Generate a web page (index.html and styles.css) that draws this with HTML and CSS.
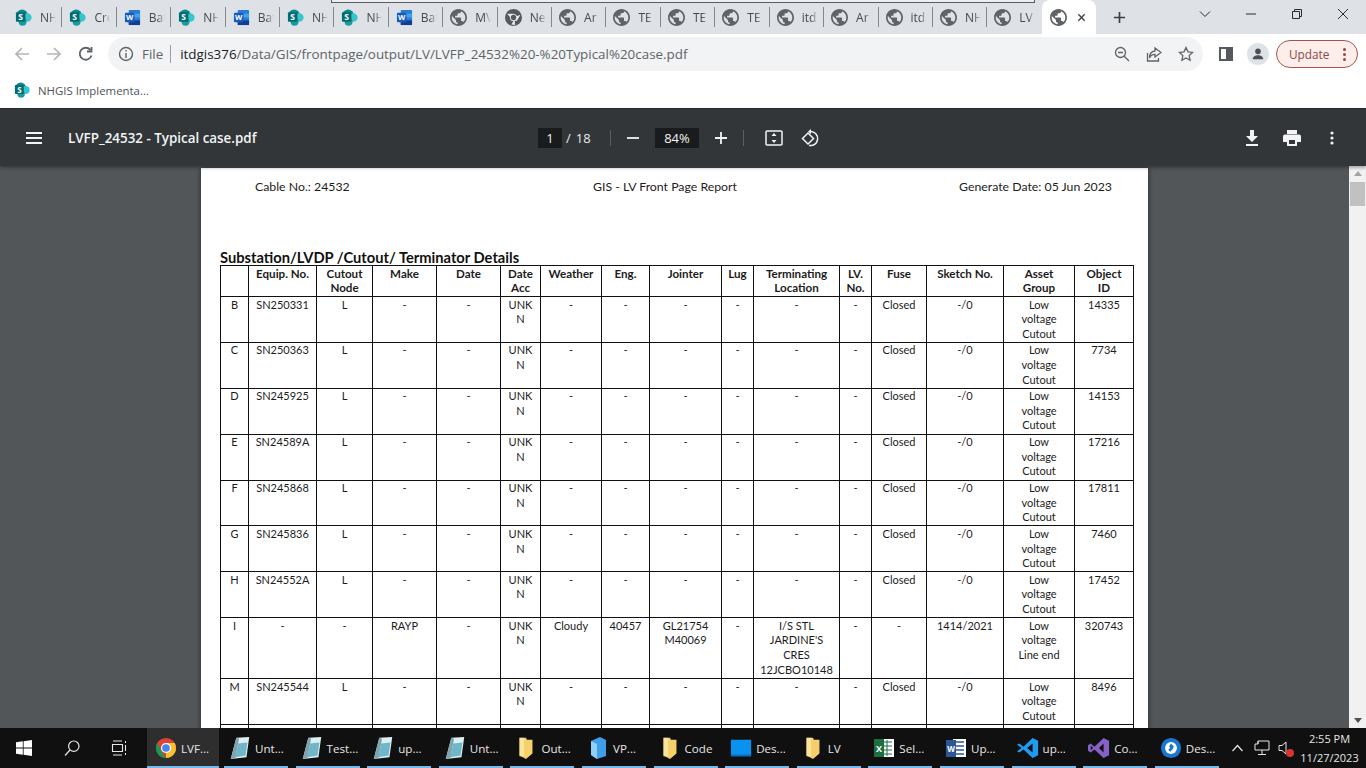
FILE: index.html
```html
<!DOCTYPE html>
<html lang="en">
<head>
<meta charset="utf-8">
<title>LVFP_24532 - Typical case.pdf</title>
<link rel="stylesheet" href="styles.css">
</head>
<body>
<svg class="sprite" width="0" height="0" aria-hidden="true">
  <symbol id="sp" viewBox="0 0 18 18">
    <circle cx="7.500" cy="6.500" r="6" fill="#058a8e"/>
    <circle cx="13" cy="9" r="4.600" fill="#37c6d0"/>
    <circle cx="8" cy="13.500" r="4.200" fill="#1a9ba1"/>
    <rect x="1" y="3.500" width="10" height="10" rx="1" fill="#036c70"/>
    <text x="6" y="12" font-size="9" font-weight="700" fill="#fff" text-anchor="middle" font-family="Open Sans">S</text>
  </symbol>
  <symbol id="wd" viewBox="0 0 18 18">
    <rect x="5" y="1" width="12" height="16" rx="1" fill="#2b7cd3"/>
    <rect x="5" y="12" width="12" height="5" fill="#103f91"/>
    <rect x="11" y="5" width="6" height="4" fill="#41a5ee"/>
    <rect x="1" y="4" width="10" height="10" rx="1" fill="#185abd"/>
    <text x="6" y="12" font-size="8" font-weight="700" fill="#fff" text-anchor="middle" font-family="Open Sans">W</text>
  </symbol>
  <symbol id="gl" viewBox="2 2 20 20">
    <path fill="#5f6368" d="M12 2C6.480 2 2 6.480 2 12s4.480 10 10 10 10-4.480 10-10S17.520 2 12 2zm-1 17.930c-3.950-.490-7-3.850-7-7.930 0-.620.080-1.210.210-1.790L9 15v1c0 1.100.900 2 2 2v1.930zm6.900-2.540c-.260-.810-1-1.390-1.900-1.390h-1v-3c0-.550-.450-1-1-1H8v-2h2c.550 0 1-.450 1-1V7h2c1.100 0 2-.900 2-2v-.410c2.930 1.190 5 4.060 5 7.410 0 2.080-.800 3.970-2.100 5.390z"/>
  </symbol>
  <symbol id="cg" viewBox="0 0 16 16">
    <circle cx="8" cy="8" r="8" fill="#55585c"/>
    <path d="M2 4.500h6.500l-3 4zM14.500 5.500l-3.500 6-2-4zM6 14.500l3-5 .5 5.500z" fill="#e8eaed"/>
    <circle cx="8" cy="8" r="3.400" fill="#e8eaed"/>
    <circle cx="8" cy="8" r="2.500" fill="#55585c"/>
  </symbol>
  <symbol id="np" viewBox="0 0 22 26">
    <path d="M7 2l14-1-3 22-17 2z" fill="#dfeef2"/>
    <path d="M1 25l6-23 3 1-4 21z" fill="#7fa3ad"/>
    <path d="M9 8l10-1-2 14-11 2z" fill="#6fb6c9"/>
  </symbol>
  <symbol id="fd" viewBox="0 0 16 26">
    <path d="M1 2h7l1 2h6v15l-7 6-7-4z" fill="#f5cf6c"/>
    <path d="M1 2h5v20H1z" fill="#fbe49c"/>
  </symbol>
</svg>

<div class="app">
  <div class="tabstrip">
    <div class="tabs">
      <div class="tab"><svg class="fav"><use href="#sp"/></svg><span class="tab-t">NH</span></div>
      <div class="tab"><svg class="fav"><use href="#sp"/></svg><span class="tab-t">Cre</span></div>
      <div class="tab"><svg class="fav"><use href="#wd"/></svg><span class="tab-t">Bat</span></div>
      <div class="tab"><svg class="fav"><use href="#sp"/></svg><span class="tab-t">NH</span></div>
      <div class="tab"><svg class="fav"><use href="#wd"/></svg><span class="tab-t">Bat</span></div>
      <div class="tab"><svg class="fav"><use href="#sp"/></svg><span class="tab-t">NH</span></div>
      <div class="tab"><svg class="fav"><use href="#sp"/></svg><span class="tab-t">NH</span></div>
      <div class="tab"><svg class="fav"><use href="#wd"/></svg><span class="tab-t">Bat</span></div>
      <div class="tab"><svg class="fav"><use href="#gl"/></svg><span class="tab-t">MV</span></div>
      <div class="tab"><svg class="fav"><use href="#cg"/></svg><span class="tab-t">Ne</span></div>
      <div class="tab"><svg class="fav"><use href="#gl"/></svg><span class="tab-t">Ar</span></div>
      <div class="tab"><svg class="fav"><use href="#gl"/></svg><span class="tab-t">TE</span></div>
      <div class="tab"><svg class="fav"><use href="#gl"/></svg><span class="tab-t">TE</span></div>
      <div class="tab"><svg class="fav"><use href="#gl"/></svg><span class="tab-t">TE</span></div>
      <div class="tab"><svg class="fav"><use href="#gl"/></svg><span class="tab-t">itd</span></div>
      <div class="tab"><svg class="fav"><use href="#gl"/></svg><span class="tab-t">Ar</span></div>
      <div class="tab"><svg class="fav"><use href="#gl"/></svg><span class="tab-t">itd</span></div>
      <div class="tab"><svg class="fav"><use href="#gl"/></svg><span class="tab-t">NH</span></div>
      <div class="tab tab-last"><svg class="fav"><use href="#gl"/></svg><span class="tab-t">LV</span></div>
      <div class="tab-active"><svg class="fav"><use href="#gl"/></svg>
        <svg class="tab-x" viewBox="0 0 10 10"><path d="M1.500 1.500l7 7M8.500 1.500l-7 7"/></svg>
      </div>
    </div>
    <svg class="newtab" viewBox="0 0 14 14"><path d="M7 1v12M1 7h12"/></svg>
    <div class="winctl">
      <svg class="wc" viewBox="0 0 12 12"><path d="M1 3.500l5 5 5-5"/></svg>
      <svg class="wc" viewBox="0 0 12 12"><path d="M1 6h10"/></svg>
      <svg class="wc" viewBox="0 0 12 12"><path d="M1.500 3.500h7v7h-7zM3.500 3.500v-2h7v7h-2"/></svg>
      <svg class="wc" viewBox="0 0 12 12"><path d="M1 1l10 10M11 1L1 11"/></svg>
    </div>
  </div>

  <div class="toolbar">
    <svg class="nav" viewBox="0 0 16 16"><path d="M15 8H2M8 2L2 8l6 6"/></svg>
    <svg class="nav" viewBox="0 0 16 16"><path d="M1 8h13M8 2l6 6-6 6"/></svg>
    <svg class="nav nav-on" viewBox="0 0 16 16"><path d="M13.500 9.500A6 6 0 1 1 12.300 3.800M13.500 1v4.500H9"/></svg>
    <div class="omni">
      <svg class="info" viewBox="0 0 16 16"><circle cx="8" cy="8" r="6.500"/><path d="M8 7v5M8 4v1.600"/></svg>
      <span class="scheme">File</span><i class="omni-sep"></i>
      <span class="url"><b>itdgis376</b>/Data/GIS/frontpage/output/LV/LVFP_24532%20-%20Typical%20case.pdf</span>
      <svg class="omi" viewBox="0 0 16 16"><circle cx="6.500" cy="6.500" r="5"/><path d="M4 6.500h5M10.200 10.200L15 15"/></svg>
      <svg class="omi" viewBox="0 0 16 16"><path d="M9 2l6 4.500L9 11V8.300C6 8.300 4.500 9.500 3.500 12 3.500 8 5.500 5.300 9 5zM1.500 7v8h11v-3"/></svg>
      <svg class="omi" viewBox="0 0 16 16"><path d="M8 1.500l2 4.300 4.700.6-3.500 3.200.9 4.700L8 12l-4.100 2.300.9-4.700-3.500-3.200 4.700-.6z"/></svg>
    </div>
    <div class="side-icon"><i></i></div>
    <div class="avatar"><svg viewBox="0 0 16 16"><circle cx="8" cy="5" r="3.200"/><path d="M2 14c0-3 3-4.500 6-4.500s6 1.500 6 4.500z"/></svg></div>
    <div class="update"><span>Update</span><i class="dots"><b></b><b></b><b></b></i></div>
  </div>

  <div class="bookmarks">
    <svg class="fav"><use href="#sp"/></svg><span>NHGIS Implementa...</span>
  </div>

  <div class="pdfbar">
    <div class="pdf-left">
      <svg class="burger" viewBox="0 0 16 12"><path d="M0 1h16M0 6h16M0 11h16"/></svg>
      <span class="pdf-title">LVFP_24532 - Typical case.pdf</span>
    </div>
    <div class="pdf-mid">
      <span class="numbox page-box">1</span><span class="pdf-total"><em>/</em>18</span>
      <i class="pdf-sep sep-a"></i>
      <svg class="pm" viewBox="0 0 12 12"><path d="M0 6h12"/></svg>
      <span class="numbox zoom-box">84%</span>
      <svg class="pm" viewBox="0 0 12 12"><path d="M0 6h12M6 0v12"/></svg>
      <i class="pdf-sep sep-b"></i>
      <svg class="fit" viewBox="0 0 18 16"><rect x="1" y="1" width="16" height="14" rx="1"/><path class="fill" d="M9 3l2.500 3h-5zM9 13l2.500-3h-5z"/></svg>
      <svg class="rot" viewBox="0 0 18 18"><path d="M1.500 9.500L7 4l5.500 5.500L7 15z"/><path d="M9.500 2.600a7 7 0 1 1-1.500 13.800"/><path class="fill" d="M10 0v5.200L7 2.600z"/></svg>
    </div>
    <div class="pdf-right">
      <svg class="pr" viewBox="0 0 14 16"><path d="M5 0h4v6h4L7 12 1 6h4zM1 14h12v2H1z"/></svg>
      <svg class="pr" viewBox="0 0 18 16"><path fill-rule="evenodd" d="M4 0h10v4H4zM2 4.500h14a2 2 0 0 1 2 2V12h-4v4H4v-4H0V6.500a2 2 0 0 1 2-2zM6 10v4h6v-4z"/></svg>
      <svg class="pr pr-dots" viewBox="0 0 4 14"><circle cx="2" cy="2" r="1.600"/><circle cx="2" cy="7" r="1.600"/><circle cx="2" cy="12" r="1.600"/></svg>
    </div>
  </div>

  <div class="viewer">
    <div class="canvas">
      <div class="page">
        <div class="report-head">
          <span>Cable No.: 24532</span>
          <span>GIS - LV Front Page Report</span>
          <span>Generate Date: 05 Jun 2023</span>
        </div>
        <h2 class="section">Substation/LVDP /Cutout/ Terminator Details</h2>
        <table class="grid">
          <colgroup>
            <col class="c28"><col class="c68"><col class="c56"><col class="c64"><col class="c64"><col class="c40"><col class="c61"><col class="c48"><col class="c72"><col class="c32"><col class="c86"><col class="c32"><col class="c55"><col class="c77"><col class="c71"><col class="c59">
          </colgroup>
          <tr class="rh"><th></th><th>Equip. No.</th><th>Cutout Node</th><th>Make</th><th>Date</th><th>Date Acc</th><th>Weather</th><th>Eng.</th><th>Jointer</th><th>Lug</th><th>Terminating Location</th><th>LV.<br>No.</th><th>Fuse</th><th>Sketch No.</th><th>Asset<br>Group</th><th>Object<br>ID</th></tr>
          <tr><td>B</td><td>SN250331</td><td>L</td><td>-</td><td>-</td><td>UNK<br>N</td><td>-</td><td>-</td><td>-</td><td>-</td><td>-</td><td>-</td><td>Closed</td><td>-/0</td><td>Low<br>voltage<br>Cutout</td><td>14335</td></tr>
          <tr><td>C</td><td>SN250363</td><td>L</td><td>-</td><td>-</td><td>UNK<br>N</td><td>-</td><td>-</td><td>-</td><td>-</td><td>-</td><td>-</td><td>Closed</td><td>-/0</td><td>Low<br>voltage<br>Cutout</td><td>7734</td></tr>
          <tr><td>D</td><td>SN245925</td><td>L</td><td>-</td><td>-</td><td>UNK<br>N</td><td>-</td><td>-</td><td>-</td><td>-</td><td>-</td><td>-</td><td>Closed</td><td>-/0</td><td>Low<br>voltage<br>Cutout</td><td>14153</td></tr>
          <tr><td>E</td><td>SN24589A</td><td>L</td><td>-</td><td>-</td><td>UNK<br>N</td><td>-</td><td>-</td><td>-</td><td>-</td><td>-</td><td>-</td><td>Closed</td><td>-/0</td><td>Low<br>voltage<br>Cutout</td><td>17216</td></tr>
          <tr><td>F</td><td>SN245868</td><td>L</td><td>-</td><td>-</td><td>UNK<br>N</td><td>-</td><td>-</td><td>-</td><td>-</td><td>-</td><td>-</td><td>Closed</td><td>-/0</td><td>Low<br>voltage<br>Cutout</td><td>17811</td></tr>
          <tr><td>G</td><td>SN245836</td><td>L</td><td>-</td><td>-</td><td>UNK<br>N</td><td>-</td><td>-</td><td>-</td><td>-</td><td>-</td><td>-</td><td>Closed</td><td>-/0</td><td>Low<br>voltage<br>Cutout</td><td>7460</td></tr>
          <tr><td>H</td><td>SN24552A</td><td>L</td><td>-</td><td>-</td><td>UNK<br>N</td><td>-</td><td>-</td><td>-</td><td>-</td><td>-</td><td>-</td><td>Closed</td><td>-/0</td><td>Low<br>voltage<br>Cutout</td><td>17452</td></tr>
          <tr class="rtall"><td>I</td><td>-</td><td>-</td><td>RAYP</td><td>-</td><td>UNK<br>N</td><td>Cloudy</td><td>40457</td><td>GL21754<br>M40069</td><td>-</td><td>I/S STL<br>JARDINE'S<br>CRES<br>12JCBO10148</td><td>-</td><td>-</td><td>1414/2021</td><td>Low<br>voltage<br>Line end</td><td>320743</td></tr>
          <tr><td>M</td><td>SN245544</td><td>L</td><td>-</td><td>-</td><td>UNK<br>N</td><td>-</td><td>-</td><td>-</td><td>-</td><td>-</td><td>-</td><td>Closed</td><td>-/0</td><td>Low<br>voltage<br>Cutout</td><td>8496</td></tr>
          <tr><td></td><td></td><td></td><td></td><td></td><td></td><td></td><td></td><td></td><td></td><td></td><td></td><td></td><td></td><td></td><td></td></tr>
        </table>
      </div>
    </div>
    <div class="vscroll">
      <i class="arrow-up"></i>
      <i class="thumb"></i>
      <i class="arrow-down"></i>
    </div>
  </div>

  <div class="taskbar">
    <svg class="tb-win" viewBox="0 0 16 16"><path d="M0 2.300l6.800-1v6.300H0zM7.600 1.200L16 0v7.600H7.600zM0 8.400h6.800v6.300l-6.800-1zM7.600 8.400H16V16l-8.400-1.200z"/></svg>
    <svg class="tb-search" viewBox="0 0 16 16"><circle cx="9.800" cy="6.200" r="5.200"/><path d="M6 10L1 15.500"/></svg>
    <svg class="tb-view" viewBox="0 0 16 16"><path d="M2 1h9M2 15h9M1.500 4.500h10v7h-10zM14.500 1v2M14.500 5v6M14.500 13v2"/></svg>
    <div class="tasks">
      <div class="task task-on">
        <svg class="ticon" viewBox="0 0 24 24"><circle cx="12" cy="12" r="11" fill="#db4437"/><path d="M12 23a11 11 0 0 0 9.500-16.500H12z" fill="#fbc02d"/><path d="M2.500 6.500L8 18l4 5A11 11 0 0 1 1.500 9z" fill="#0f9d58"/><circle cx="12" cy="12" r="5.500" fill="#fff"/><circle cx="12" cy="12" r="4.200" fill="#4285f4"/></svg>
        <span>LVF...</span>
      </div>
      <div class="task"><svg class="ticon"><use href="#np"/></svg><span>Unt...</span></div>
      <div class="task"><svg class="ticon"><use href="#np"/></svg><span>Test...</span></div>
      <div class="task"><svg class="ticon"><use href="#np"/></svg><span>up...</span></div>
      <div class="task"><svg class="ticon"><use href="#np"/></svg><span>Unt...</span></div>
      <div class="task"><svg class="ticon"><use href="#fd"/></svg><span>Out...</span></div>
      <div class="task"><svg class="ticon" viewBox="0 0 20 24"><path d="M3 5l9-4 6 3v16l-9 3-6-4z" fill="#3f9fea"/><path d="M3 5l6 3v15l-6-4z" fill="#8fd0fa"/></svg><span>VP...</span></div>
      <div class="task"><svg class="ticon"><use href="#fd"/></svg><span>Code</span></div>
      <div class="task"><svg class="ticon" viewBox="0 0 24 22"><rect x="1" y="2" width="22" height="18" fill="#0a93ee"/><rect x="1" y="18" width="22" height="2" fill="#0a6fc0"/></svg><span>Des...</span></div>
      <div class="task"><svg class="ticon"><use href="#fd"/></svg><span>LV</span></div>
      <div class="task"><svg class="ticon" viewBox="0 0 22 22"><rect x="8" y="2" width="13" height="18" fill="#fff"/><path d="M10 5h9M10 9h9M10 13h9M10 17h9M14 3v16" stroke="#1d6f42" stroke-width="1"/><rect x="1" y="2" width="10" height="18" fill="#1d6f42"/><text x="6" y="15" font-size="9" font-weight="700" fill="#fff" text-anchor="middle" font-family="Open Sans">X</text></svg><span>Sel...</span></div>
      <div class="task"><svg class="ticon" viewBox="0 0 22 22"><rect x="8" y="2" width="13" height="18" fill="#fff"/><path d="M10 5h9M10 9h9M10 13h9M10 17h9" stroke="#2b5797" stroke-width="1.500"/><rect x="1" y="3" width="10" height="17" fill="#2b5797"/><text x="6" y="15" font-size="8" font-weight="700" fill="#fff" text-anchor="middle" font-family="Open Sans">W</text></svg><span>Up...</span></div>
      <div class="task"><svg class="ticon" viewBox="0 0 24 24"><path d="M17 1l6 3v16l-6 3L7 13.500 2.500 17 0 15.500 5 12 0 8.500 2.500 7 7 10.500zM17 7l-6 5 6 5z" fill="#1f9cf0"/></svg><span>up...</span></div>
      <div class="task"><svg class="ticon" viewBox="0 0 24 24"><path d="M17 1l6 3v16l-6 3L7 13.500 3 17 0 15V9l3-2 4 3.500zM17 7l-5 5 5 5zM3 9.500v5L5.500 12z" fill="#8661c5"/></svg><span>Co...</span></div>
      <div class="task"><svg class="ticon" viewBox="0 0 24 24"><circle cx="12" cy="12" r="11" fill="#1976d2"/><circle cx="12" cy="12" r="6.500" fill="#fff"/><path d="M12 7l3 3-1 3-3 3-2-2 2-2-1-2z" fill="#1976d2"/></svg><span>Des...</span></div>
    </div>
    <div class="tray">
      <svg class="tray-chev" viewBox="0 0 12 8"><path d="M1 7l5-5.500L11 7"/></svg>
      <svg class="tray-net" viewBox="0 0 16 16"><path d="M4 1h11v9H1V4h3zM4 1v3M8 10v4M4 14.500h8"/></svg>
      <div class="tray-snd">
        <svg viewBox="0 0 16 16"><path d="M1 5.500h3l4-3.500v12l-4-3.500H1z"/></svg>
        <i class="mute"></i>
      </div>
      <div class="clock"><span>2:55 PM</span><span>11/27/2023</span></div>
    </div>
  </div>
  <div class="top-artifact"></div>
</div>
</body>
</html>
```
FILE: styles.css
```css
* { box-sizing: border-box; }
html, body { margin: 0; padding: 0; height: 100%; overflow: hidden; }
body { font-family: "Open Sans", "Noto Sans", sans-serif; background: #525659; }
.sprite { position: absolute; }
.app { position: relative; display: flex; flex-direction: column; width: 1366px; height: 768px; overflow: hidden; }

/* Tab strip */
.tabstrip { display: flex; align-items: stretch; height: 34px; background: #dee1e6; flex: none; }
.tabs { display: flex; width: 1096px; padding-left: 8px; flex: none; }
.tab { position: relative; flex: none; width: 54.42px; display: flex; align-items: center; padding-left: 7px; gap: 8px; }
.tab::after { content: ""; position: absolute; right: 0; top: 7px; width: 1px; height: 20px; background: #84878c; }
.tab-last::after { display: none; }
.fav { width: 17px; height: 17px; flex: none; }
.tab-t { font-size: 12px; color: #45494d; width: 16px; flex: none; white-space: nowrap; -webkit-mask-image: linear-gradient(90deg, #000 55%, transparent 100%); mask-image: linear-gradient(90deg, #000 55%, transparent 100%); }
.tab-active { flex: none; width: 54px; display: flex; align-items: center; padding-left: 8px; background: #fff; border-radius: 8px 8px 0 0; }
.tab-x { width: 9px; height: 9px; margin-left: 10px; fill: none; stroke: #44474a; stroke-width: 1.6; }
.newtab { width: 13px; height: 13px; margin: 11px 0 0 17px; fill: none; stroke: #3c4043; stroke-width: 1.8; flex: none; }
.winctl { display: flex; margin-left: auto; }
.wc { width: 46px; height: 12px; margin-top: 8px; fill: none; stroke: #2b2d30; stroke-width: 1; flex: none; }

/* Address bar */
.toolbar { display: flex; align-items: center; height: 40px; background: #fff; padding: 0 8px 0 14px; flex: none; }
.nav { width: 16px; height: 16px; margin-right: 16px; fill: none; stroke: #b2b5b9; stroke-width: 1.7; flex: none; }
.nav-on { stroke: #5f6368; stroke-width: 1.8; margin-right: 14px; }
.omni { display: flex; align-items: center; width: 1095px; height: 34px; border-radius: 17px; background: #f1f3f4; padding: 0 9px 0 10px; flex: none; }
.info { width: 16px; height: 16px; fill: none; stroke: #5f6368; stroke-width: 1.4; flex: none; }
.scheme { font-size: 13.4px; color: #5f6368; margin-left: 8px; }
.omni-sep { width: 1px; height: 18px; background: #9aa0a6; margin: 0 9px 0 7px; }
.url { font-size: 13.4px; color: #5f6368; flex: 1; white-space: nowrap; }
.url b { font-weight: 400; color: #202124; }
.omi { width: 16px; height: 16px; margin-left: 16px; fill: none; stroke: #5f6368; stroke-width: 1.3; flex: none; }
.side-icon { width: 14px; height: 14px; border: 2px solid #55585c; background: #fff; margin-left: 16px; display: flex; justify-content: flex-end; flex: none; }
.side-icon i { width: 5px; background: #55585c; }
.avatar { width: 22px; height: 22px; border-radius: 50%; background: #dfe3e8; margin-left: 14px; display: flex; align-items: center; justify-content: center; flex: none; }
.avatar svg { width: 14px; height: 14px; fill: #4d5156; }
.update { width: 82px; height: 28px; margin-left: 7px; border: 1px solid #a8544d; border-radius: 14px; background: #fdeeec; display: flex; align-items: center; justify-content: space-between; padding: 0 11px 0 12px; font-size: 11.8px; color: #8f4a45; flex: none; }
.dots { display: flex; flex-direction: column; gap: 2px; }
.dots b { display: block; width: 3px; height: 3px; border-radius: 50%; background: #a3453e; }

/* Bookmarks */
.bookmarks { display: flex; align-items: center; gap: 8px; height: 34px; padding: 0 0 2px 14px; background: #fff; font-size: 11.4px; color: #4f5357; flex: none; }
.bookmarks .fav { width: 16px; height: 16px; }

/* PDF toolbar */
.pdfbar { position: relative; z-index: 2; display: flex; align-items: center; height: 58px; background: #323639; border-top: 1px solid #2a2c2e; box-shadow: 0 2px 3px rgba(0,0,0,.3); color: #f1f3f4; flex: none; }
.pdf-left { display: flex; align-items: center; width: 538px; padding-left: 26px; flex: none; }
.burger { width: 16px; height: 12px; stroke: #f1f3f4; stroke-width: 1.8; fill: none; }
.pdf-title { margin-left: 26px; font-size: 13.4px; font-weight: 600; color: #f1f3f4; white-space: nowrap; }
.pdf-mid { display: flex; align-items: center; flex: none; }
.numbox { height: 20px; background: #191b1c; font-size: 13px; display: flex; align-items: center; justify-content: center; }
.page-box { width: 24px; }
.pdf-total { font-size: 13px; margin-left: 4px; width: 25px; color: #e8eaed; white-space: nowrap; }
.pdf-total em { font-style: normal; margin-right: 5px; }
.pdf-sep { width: 1px; height: 16px; background: #5c5f62; flex: none; }
.sep-a { margin-left: 19px; margin-right: 16px; }
.pm { width: 12px; height: 12px; fill: none; stroke: #f1f3f4; stroke-width: 1.8; flex: none; }
.zoom-box { width: 44px; margin: 0 16px; }
.sep-b { margin-left: 16px; margin-right: 21px; }
.fit { width: 18px; height: 16px; fill: none; stroke: #f1f3f4; stroke-width: 1.5; flex: none; }
.fit .fill { fill: #f1f3f4; stroke: none; }
.rot { width: 18px; height: 18px; margin-left: 18px; fill: none; stroke: #f1f3f4; stroke-width: 1.5; flex: none; }
.rot .fill { fill: #f1f3f4; stroke: none; }
.pdf-right { display: flex; align-items: center; margin-left: auto; padding-right: 32px; }
.pr { width: 14px; height: 16px; fill: #f1f3f4; flex: none; margin-left: 24px; }
.pr:nth-child(2) { width: 18px; height: 16px; }
.pr-dots { width: 4px; height: 14px; margin-left: 29px; }

/* Viewer */
.viewer { display: flex; flex: 1; min-height: 0; overflow: hidden; background: #525659; }
.canvas { flex: 1; min-width: 0; overflow: hidden; padding-top: 2px; display: flex; justify-content: center; align-items: flex-start; }
.page { width: 947px; flex: none; background: #fff; padding: 12px 14px 0 19px; box-shadow: -2px 0 3px rgba(0,0,0,.25), 2px 0 3px rgba(0,0,0,.25); color: #1c1c1c; font-family: Lato, "Open Sans", sans-serif; }
.report-head { display: grid; grid-template-columns: 338px auto 1fr; padding: 0 22px 0 35px; font-size: 12.3px; line-height: 14px; height: 14px; }
.report-head span:nth-child(3) { text-align: right; }
.section { margin: 55px 0 0 0; font-size: 14.7px; line-height: 16px; height: 16px; font-weight: 700; color: #111; white-space: nowrap; }
.grid { border-collapse: collapse; table-layout: fixed; width: 913px; font-size: 11px; line-height: 14.600px; }
.grid th, .grid td { border: 1.500px solid #111; padding: .5px 2px 0; text-align: center; vertical-align: top; }
.grid th { font-weight: 700; font-size: 11.6px; }
.grid tr { height: 45.900px; }
.grid .rh { height: 31px; }
.grid .rtall { height: 61px; }
.c28 { width: 28px; } .c68 { width: 68px; } .c56 { width: 56px; } .c64 { width: 64px; }
.c40 { width: 40px; } .c61 { width: 61px; } .c48 { width: 48px; } .c72 { width: 72px; }
.c32 { width: 32px; } .c86 { width: 86px; } .c55 { width: 55px; } .c77 { width: 77px; } .c71 { width: 71px; } .c59 { width: 59px; }
.vscroll { width: 17px; flex: none; background: #f1f1f1; display: flex; flex-direction: column; align-items: center; }
.arrow-up { width: 0; height: 0; margin-top: 5px; border: 4px solid transparent; border-top: 0; border-bottom: 5px solid #a3a3a3; flex: none; }
.thumb { width: 15px; height: 24px; margin-top: 6px; background: #c1c1c1; flex: none; }
.arrow-down { width: 0; height: 0; margin-top: auto; margin-bottom: 5px; border: 4px solid transparent; border-bottom: 0; border-top: 5px solid #505050; flex: none; }

/* Taskbar */
.taskbar { display: flex; align-items: center; height: 40px; background: #101010; color: #e6e6e6; flex: none; }
.tb-win { width: 16px; height: 16px; margin-left: 16px; fill: #fff; flex: none; }
.tb-search { width: 16px; height: 16px; margin-left: 32px; fill: none; stroke: #e6e6e6; stroke-width: 1.2; flex: none; }
.tb-view { width: 16px; height: 16px; margin-left: 31px; fill: none; stroke: #e6e6e6; stroke-width: 1.1; flex: none; }
.tasks { display: flex; gap: 7.600px; margin-left: 20px; height: 40px; flex: none; }
.task { position: relative; width: 64px; height: 40px; display: flex; align-items: center; padding-left: 5px; gap: 4px; font-size: 11.6px; white-space: nowrap; flex: none; }
.task::after { content: ""; position: absolute; left: 0; right: 0; bottom: 0; height: 2px; background: #76b9ed; }
.task-on { width: 72px; margin-right: -2.600px; background: #2e2e2e; padding-left: 8px; }
.ticon { width: 22px; height: 24px; flex: none; }
.tray { display: flex; align-items: center; margin-left: auto; padding-right: 6.500px; flex: none; }
.tray-chev { width: 13px; height: 8px; fill: none; stroke: #e6e6e6; stroke-width: 1.2; flex: none; }
.tray-net { width: 16px; height: 16px; margin-left: 10px; fill: none; stroke: #e6e6e6; stroke-width: 1; flex: none; }
.tray-snd { position: relative; width: 16px; height: 16px; margin-left: 8px; flex: none; }
.tray-snd svg { width: 16px; height: 16px; fill: none; stroke: #e6e6e6; stroke-width: 1; display: block; }
.mute { position: absolute; right: 0; bottom: -1px; width: 8px; height: 8px; border-radius: 50%; background: #d9352c; }
.clock { display: flex; flex-direction: column; align-items: center; margin-left: 6px; font-size: 11px; line-height: 19px; width: 60px; white-space: nowrap; flex: none; }

/* Edge of the capture at the top of the tab strip */
.top-artifact { position: absolute; left: 331px; top: 0; width: 704px; height: 3px; background: #eceef1; border: 1px solid #5a5c60; border-top: 0; }
```
